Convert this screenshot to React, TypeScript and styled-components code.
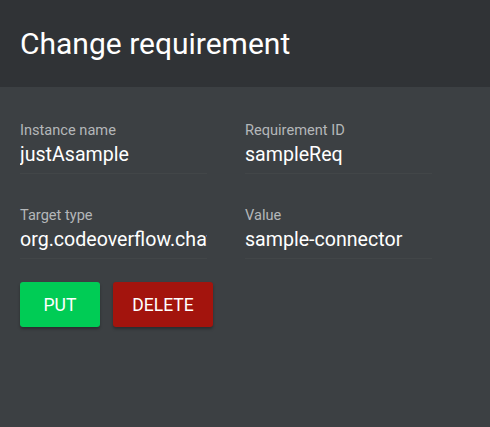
import React from "react";
import styled, { createGlobalStyle } from "styled-components";

const Global = createGlobalStyle`
  html, body { margin: 0; padding: 0; background: #3c4043; }
  body { font-family: Roboto, "Noto Sans", sans-serif; }
`;

const Dialog = styled.div`
  width: 490px;
  height: 427px;
  background: #3c4043;
  display: flex;
  flex-direction: column;
`;

const Header = styled.div`
  height: 87px;
  background: #303336;
  display: flex;
  align-items: center;
  padding: 0 20px;
  box-sizing: border-box;
`;

const Title = styled.h1`
  margin: 0;
  font-size: 30px;
  font-weight: 400;
  color: #ffffff;
`;

const Body = styled.div`
  padding: 35px 20px 0 20px;
  display: flex;
  flex-direction: column;
`;

const Grid = styled.div`
  display: grid;
  grid-template-columns: 187px 187px;
  column-gap: 38px;
  row-gap: 33px;
`;

const Field = styled.div`
  display: flex;
  flex-direction: column;
`;

const Label = styled.label`
  font-size: 14.6px;
  color: #b4b7b9;
  line-height: 17px;
  height: 17px;
`;

const Input = styled.input`
  font-family: Roboto, "Noto Sans", sans-serif;
  font-size: 19.6px;
  color: #ffffff;
  background: transparent;
  border: none;
  border-bottom: 1px solid rgba(255, 255, 255, 0.03);
  padding: 4px 0 6px 0;
  margin: 0;
  outline: none;
  width: 187px;
  line-height: 24px;
  height: 24px;
  box-sizing: content-box;
`;

const Actions = styled.div`
  display: flex;
  gap: 13px;
  margin-top: 23px;
`;

const Button = styled.button<{ $tone: "green" | "red"; $w: number }>`
  width: ${(p) => p.$w}px;
  height: 45px;
  border: none;
  border-radius: 3px;
  background: ${(p) => (p.$tone === "green" ? "#00cc55" : "#a3140d")};
  color: #ffffff;
  font-family: Roboto, "Noto Sans", sans-serif;
  font-size: 17.5px;
  text-transform: uppercase;
  box-shadow: 0 2px 3px rgba(0, 0, 0, 0.3);
  padding: 0;
`;

export default function App() {
  return (
    <Dialog>
      <Global />
      <Header>
        <Title>Change requirement</Title>
      </Header>
      <Body>
        <Grid>
          <Field>
            <Label>Instance name</Label>
            <Input readOnly value="justAsample" />
          </Field>
          <Field>
            <Label>Requirement ID</Label>
            <Input readOnly value="sampleReq" />
          </Field>
          <Field>
            <Label>Target type</Label>
            <Input readOnly value="org.codeoverflow.chatoverflow.api" />
          </Field>
          <Field>
            <Label>Value</Label>
            <Input readOnly value="sample-connector" />
          </Field>
        </Grid>
        <Actions>
          <Button $tone="green" $w={80}>Put</Button>
          <Button $tone="red" $w={100}>Delete</Button>
        </Actions>
      </Body>
    </Dialog>
  );
}
